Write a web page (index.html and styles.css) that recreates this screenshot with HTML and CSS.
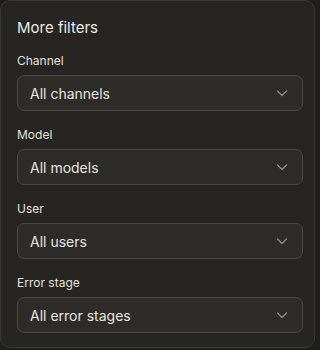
FILE: index.html
```html
<!DOCTYPE html>
<html>
<head>
<meta charset="utf-8">
<link rel="stylesheet" href="styles.css">
</head>
<body>
<div class="panel">
  <h2 class="title">More filters</h2>
  <div class="fields">
    <div class="field">
      <label class="label">Channel</label>
      <div class="select"><span>All channels</span><svg class="chev" viewBox="0 0 16 16"><path d="M3.5 6 8 10.5 12.5 6"/></svg></div>
    </div>
    <div class="field">
      <label class="label">Model</label>
      <div class="select"><span>All models</span><svg class="chev" viewBox="0 0 16 16"><path d="M3.5 6 8 10.5 12.5 6"/></svg></div>
    </div>
    <div class="field">
      <label class="label">User</label>
      <div class="select"><span>All users</span><svg class="chev" viewBox="0 0 16 16"><path d="M3.5 6 8 10.5 12.5 6"/></svg></div>
    </div>
    <div class="field">
      <label class="label">Error stage</label>
      <div class="select"><span>All error stages</span><svg class="chev" viewBox="0 0 16 16"><path d="M3.5 6 8 10.5 12.5 6"/></svg></div>
    </div>
  </div>
</div>
</body>
</html>
```
FILE: styles.css
```css
html, body {
  margin: 0;
  padding: 0;
  background: #1f1e1b;
  width: 320px;
  height: 350px;
  overflow: hidden;
}
body {
  font-family: Inter, "Liberation Sans", sans-serif;
  color: #e9e7e2;
}
.panel {
  box-sizing: border-box;
  width: 315px;
  height: 348px;
  background: #262521;
  border: 1px solid #3a3833;
  border-radius: 10px;
  padding: 17px 15px 15px 16px;
  display: flex;
  flex-direction: column;
  gap: 15px;
}
.title {
  margin: 0;
  font-size: 15px;
  line-height: 20px;
  font-weight: 400;
  color: #ecebe6;
}
.fields {
  display: flex;
  flex-direction: column;
  gap: 16px;
}
.field {
  display: flex;
  flex-direction: column;
  gap: 6px;
}
.label {
  font-size: 12px;
  line-height: 16px;
  font-weight: 400;
  color: #e4e2dc;
}
.select {
  box-sizing: border-box;
  height: 36px;
  width: 286px;
  border: 1px solid #4a4843;
  border-radius: 7px;
  background: #2d2c28;
  display: flex;
  align-items: center;
  justify-content: space-between;
  padding: 0 12px 0 12px;
  font-size: 14px;
  color: #e8e6e1;
}
.chev {
  width: 16px;
  height: 16px;
  fill: none;
  stroke: #8d8a83;
  stroke-width: 1.4;
  stroke-linecap: round;
  stroke-linejoin: round;
}
```
